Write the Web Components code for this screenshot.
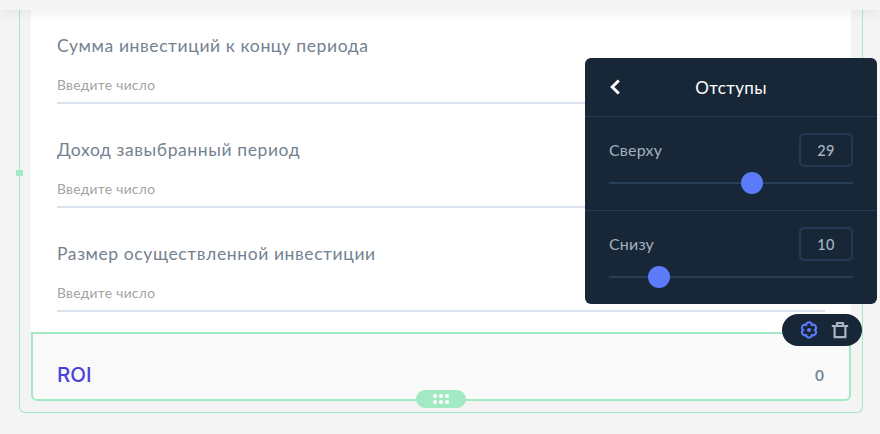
<!DOCTYPE html>
<html>
<head>
<meta charset="utf-8">
<style>
  html, body { margin: 0; height: 100%; overflow: hidden; background: #f4f4f4; font-family: "Lato", "Noto Sans", sans-serif; }
</style>
</head>
<body>
<form-canvas>
  <number-field label="Сумма инвестиций к концу периода"></number-field>
  <number-field label="Доход завыбранный период"></number-field>
  <number-field label="Размер осуществленной инвестиции"></number-field>
  <result-row slot="result" label="ROI" value="0"></result-row>
</form-canvas>
<spacing-panel>
  <spacing-slider label="Сверху" value="29" pos="143"></spacing-slider>
  <spacing-slider label="Снизу" value="10" pos="50"></spacing-slider>
</spacing-panel>
<block-toolbar></block-toolbar>

<script>
class FormCanvas extends HTMLElement {
  connectedCallback() {
    this.attachShadow({ mode: 'open' });
    this.shadowRoot.innerHTML = `
      <style>
        :host { display: block; }
        .topbar { height: 10px; background: #f5f5f5; box-shadow: 0 3px 12px rgba(0,0,0,.07); position: relative; z-index: 1; }
        .frame {
          position: relative;
          margin-left: 19px;
          width: 844px;
          box-sizing: border-box;
          border: 1px solid #a3e9c3;
          border-top: 0;
          border-radius: 0 0 6px 6px;
          padding: 0 11px 11px;
        }
        .card { background: #fff; padding: 25px 26px 20px; display: flex; flex-direction: column; gap: 35px; }
        .side-handle { position: absolute; left: -4px; top: 160px; width: 7px; height: 6px; background: #a3e9c3; }
      </style>
      <div class="topbar"></div>
      <div class="frame">
        <div class="side-handle"></div>
        <div class="card"><slot></slot></div>
        <slot name="result"></slot>
      </div>`;
  }
}
customElements.define('form-canvas', FormCanvas);

class NumberField extends HTMLElement {
  connectedCallback() {
    this.attachShadow({ mode: 'open' });
    this.shadowRoot.innerHTML = `
      <style>
        :host { display: block; }
        .label { font: 400 17.5px/22px "Lato", "Noto Sans", sans-serif; letter-spacing: .6px; color: #748290; }
        .input { height: 45px; border-bottom: 2px solid #dbe4ee; display: flex; align-items: center; }
        .hint { font: 400 13.8px/16px "Lato", "Noto Sans", sans-serif; letter-spacing: .3px; color: #a3a3a3; margin-top: 10px; }
      </style>
      <div class="label">${this.getAttribute('label')}</div>
      <div class="input"><span class="hint">Введите число</span></div>`;
  }
}
customElements.define('number-field', NumberField);

class ResultRow extends HTMLElement {
  connectedCallback() {
    this.attachShadow({ mode: 'open' });
    this.shadowRoot.innerHTML = `
      <style>
        :host {
          display: flex;
          position: relative;
          box-sizing: border-box;
          height: 69px;
          border: 2px solid #a3e9c3;
          border-radius: 0 0 6px 6px;
          background: #fafafa;
          padding: 17px 25px 0 24px;
          align-items: center;
          justify-content: space-between;
        }
        .name { font: 500 20.5px/24px "Inter", "Lato", sans-serif; color: #4a44d6; }
        .val { font: 700 15.5px/18px "Lato", sans-serif; color: #7d8a99; }
        .grip {
          position: absolute; left: 383px; bottom: -9px; width: 50px; height: 18px;
          background: #a3e9c3; border-radius: 9px;
          display: grid; grid-template-columns: repeat(3, 4px); gap: 2px; justify-content: center; align-content: center;
        }
        .grip i { width: 4px; height: 4px; border-radius: 50%; background: #fff; }
      </style>
      <span class="name">${this.getAttribute('label')}</span>
      <span class="val">${this.getAttribute('value')}</span>
      <div class="grip"><i></i><i></i><i></i><i></i><i></i><i></i></div>`;
  }
}
customElements.define('result-row', ResultRow);

class SpacingPanel extends HTMLElement {
  connectedCallback() {
    this.attachShadow({ mode: 'open' });
    this.shadowRoot.innerHTML = `
      <style>
        :host {
          display: block; position: absolute; left: 585px; top: 58px; width: 292px; height: 246px;
          background: #172738; border-radius: 6px; z-index: 2;
          font-family: "Lato", "Noto Sans", sans-serif;
        }
        header {
          height: 59px; box-sizing: border-box; border-bottom: 1px solid #243c55;
          display: flex; align-items: center; justify-content: center; position: relative;
          color: #fff; font-size: 17px; letter-spacing: .35px;
        }
        svg { position: absolute; left: 24px; top: 21px; }
        ::slotted(spacing-slider:not(:last-child)) { border-bottom: 1px solid #243c55; }
      </style>
      <header>
        <svg width="12" height="16" viewBox="0 0 12 16"><path d="M9.8 1.5 L3.2 8 L9.8 14.5" fill="none" stroke="#fff" stroke-width="3"/></svg>
        Отступы
      </header>
      <slot></slot>`;
  }
}
customElements.define('spacing-panel', SpacingPanel);

class SpacingSlider extends HTMLElement {
  connectedCallback() {
    this.attachShadow({ mode: 'open' });
    this.shadowRoot.innerHTML = `
      <style>
        :host { display: block; box-sizing: border-box; height: 94px; padding: 16px 24px 0; }
        :host(:last-child) { height: 93px; }
        .row { display: flex; justify-content: space-between; align-items: center; }
        .name { font-size: 16px; letter-spacing: .2px; color: #a3b0bd; margin-top: -2px; }
        .box {
          width: 54px; height: 34px; box-sizing: border-box; border: 2px solid #233a52; border-radius: 5px;
          display: flex; align-items: center; justify-content: center;
          font-size: 14.5px; font-weight: 500; letter-spacing: .4px; color: #a9b5c1;
        }
        .track { position: relative; height: 2px; background: #26405a; margin-top: 15px; }
        .thumb { position: absolute; top: -10px; width: 22px; height: 22px; margin-left: -11px; border-radius: 50%; background: #5b7bfb; }
      </style>
      <div class="row"><span class="name">${this.getAttribute('label')}</span><span class="box">${this.getAttribute('value')}</span></div>
      <div class="track"><div class="thumb" style="left:${this.getAttribute('pos')}px"></div></div>`;
  }
}
customElements.define('spacing-slider', SpacingSlider);

class BlockToolbar extends HTMLElement {
  connectedCallback() {
    this.attachShadow({ mode: 'open' });
    this.shadowRoot.innerHTML = `
      <style>
        :host {
          display: flex; position: absolute; left: 782px; top: 314px; width: 80px; height: 32px;
          background: #172738; border-radius: 16px; z-index: 2;
          align-items: center; justify-content: center; gap: 13px; padding-left: 5px; box-sizing: border-box;
        }
        svg { display: block; }
      </style>
      <svg width="18" height="18" viewBox="0 0 18 18" fill="none" stroke="#5b7bfb" stroke-width="2" stroke-linejoin="round">
        <path d="M11.8 4.15A2.8 2.8 0 0 1 14.6 9A2.8 2.8 0 0 1 11.8 13.85A2.8 2.8 0 0 1 6.2 13.85A2.8 2.8 0 0 1 3.4 9A2.8 2.8 0 0 1 6.2 4.15A2.8 2.8 0 0 1 11.8 4.15Z"/>
        <circle cx="9" cy="9" r="2" fill="#5b7bfb" stroke="none"/>
      </svg>
      <svg width="18" height="18" viewBox="0 0 18 18" fill="none" stroke="#a9b5c1" stroke-width="2.2" stroke-linejoin="round">
        <path d="M.8 5h16.4M6 5V2h6v3M3.6 5v11.2h10.8V5"/>
      </svg>`;
  }
}
customElements.define('block-toolbar', BlockToolbar);
</script>
</body>
</html>
